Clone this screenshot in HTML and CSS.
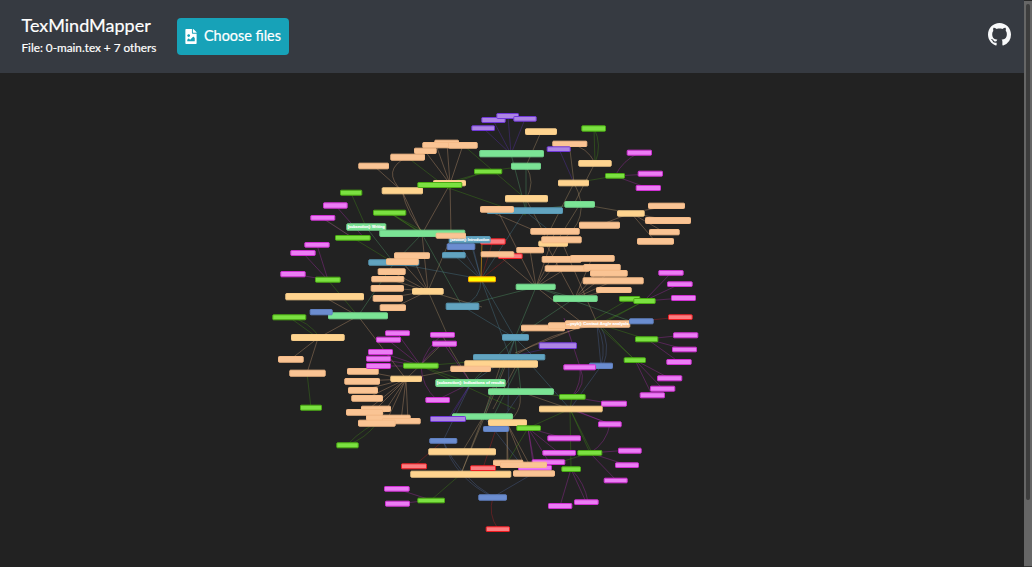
FILE: index.html
```html
<!DOCTYPE html>
<html lang="en">
<head>
<meta charset="utf-8">
<title>TexMindMapper</title>
<link rel="stylesheet" href="styles.css">
</head>
<body>
<div class="app">
  <div class="page">
    <header class="navbar">
      <div class="brand">
        <h1 class="brand-title">TexMindMapper</h1>
        <p class="brand-file">File: 0-main.tex + 7 others</p>
      </div>
      <button class="choose" type="button">
        <svg class="choose-icon" viewBox="0 0 384 512" aria-hidden="true"><path d="M384 121.941V128H256V0h6.059a24 24 0 0 1 16.97 7.029l97.941 97.941a24.002 24.002 0 0 1 7.03 16.971zM248 160c-13.2 0-24-10.8-24-24V0H24C10.745 0 0 10.745 0 24v464c0 13.255 10.745 24 24 24h336c13.255 0 24-10.745 24-24V160H248zm-135.455 16c26.51 0 48 21.49 48 48s-21.49 48-48 48-48-21.49-48-48 21.491-48 48-48zm208 240h-256l.485-48.485L104.545 328c4.686-4.686 11.799-4.201 16.485.485L160.545 368 264.06 264.485c4.686-4.686 12.284-4.686 16.971 0L320.545 304v112z"/></svg>
        <span>Choose files</span>
      </button>
      <a class="github" href="#" aria-label="GitHub">
        <svg viewBox="0 0 16 16"><path d="M8 0C3.58 0 0 3.58 0 8c0 3.54 2.29 6.53 5.47 7.59.4.07.55-.17.55-.38 0-.19-.01-.82-.01-1.49-2.01.37-2.53-.49-2.69-.94-.09-.23-.48-.94-.82-1.13-.28-.15-.68-.52-.01-.53.63-.01 1.08.58 1.23.82.72 1.21 1.87.87 2.33.66.07-.52.28-.87.51-1.07-1.78-.2-3.64-.89-3.64-3.95 0-.87.31-1.59.82-2.15-.08-.2-.36-1.02.08-2.12 0 0 .67-.21 2.2.82.64-.18 1.32-.27 2-.27s1.36.09 2 .27c1.53-1.04 2.2-.82 2.2-.82.44 1.1.16 1.92.08 2.12.51.56.82 1.27.82 2.15 0 3.07-1.87 3.75-3.65 3.95.29.25.54.73.54 1.48 0 1.07-.01 1.93-.01 2.2 0 .21.15.46.55.38A8.01 8.01 0 0 0 16 8c0-4.42-3.58-8-8-8z"/></svg>
      </a>
    </header>
    <main class="map">
      <svg id="graph" class="graph" viewBox="0 73 1024 494"></svg>
    </main>
  </div>
  <div class="scrollbar"><div class="thumb"></div></div>
</div>
<script src="graph.js"></script>
</body>
</html>
```
FILE: styles.css
```css
* { box-sizing: border-box; }
html, body { height: 100%; }
body { margin: 0; overflow: hidden; background: #222; color: #fff; font-family: Lato, sans-serif; }
.app { display: flex; height: 100%; }
.page { flex: 1; display: flex; flex-direction: column; min-width: 0; }
.navbar { display: flex; align-items: center; height: 73px; padding: 0 13px 0 21.5px; background: #363a41; }
.brand { width: 155.5px; padding-bottom: 2px; white-space: nowrap; }
.brand-title { margin: 0; font-size: 18px; line-height: 24px; font-weight: 400; -webkit-text-stroke: .2px #fff; }
.brand-file { margin: 0; font-size: 11.75px; line-height: 22px; -webkit-text-stroke: .2px #fff; }
.choose { display: flex; align-items: center; gap: 7px; width: 112px; height: 37px; padding: 0 8px 1px; border: 0; border-radius: 4px; background: #17a2b8; color: #fff; font: 400 14.4px/22px Lato, sans-serif; white-space: nowrap; }
.choose span { -webkit-text-stroke: .2px #fff; }
.choose-icon { flex: none; width: 12px; height: 15px; fill: #fff; }
.github { margin-left: auto; width: 23px; height: 23px; margin-top: -4px; }
.github svg { display: block; width: 23px; height: 23px; fill: #f8f9fa; }
.map { flex: 1; min-height: 0; }
.graph { display: block; width: 1024px; height: 494px; }
.scrollbar { width: 8px; padding: 3px 2px 0; background: #666; border-top: 1px solid #292929; border-bottom: 1px solid #333; }
.thumb { width: 4px; height: 496px; border-radius: 2px; background: #3d3d3d; }

.edge { fill: none; stroke-width: .9; stroke-opacity: .33; }
.node { stroke-width: 1; }
.label { font: 700 4.4px "Liberation Sans", sans-serif; fill: #fff; stroke: #fff; stroke-width: .15; text-anchor: middle; }

.node.orange { fill: #fac494; stroke: #f5bb88; }
.node.tan { fill: #ffd48f; stroke: #f5cb89; }
.node.mint { fill: #7be495; stroke: #72d28b; }
.node.teal { fill: #62a4c0; stroke: #5798b4; }
.node.blue { fill: #6b8dd0; stroke: #6080c0; }
.node.green { fill: #7be141; stroke: #4aab13; }
.node.pink { fill: #eb7df4; stroke: #d02fd3; }
.node.purple { fill: #ad85e4; stroke: #7038d8; }
.node.red { fill: #fb7e81; stroke: #f01c22; }
.node.yellow { fill: #ffff00; stroke: #ffa500; }

.edge.orange { stroke: #f5bb88; }
.edge.tan { stroke: #dcb880; }
.edge.mint { stroke: #62c580; }
.edge.teal { stroke: #5798b4; }
.edge.blue { stroke: #5b7abb; }
.edge.green { stroke: #4aab13; }
.edge.pink { stroke: #d02fd3; }
.edge.purple { stroke: #6a35d8; }
.edge.red { stroke: #e02025; }
.edge.yellow { stroke: #e09a10; stroke-opacity: .7; }
```
FILE: graph.js
```js
// Edges per colour: x1 y1 x2 y2 [bend], bend being the sideways offset of the curve.
const edges = {
  orange: `374 166 402 191;407 157 402 191 -12;425 151 450 184;436 145 450 184;447 143 450 184;463 145 450 184;450 184 422 234;402 191 422 234;402 191 424 234 -3;450 184 451 235;
    497 209 536 287;555 231 536 287;561 240 536 287;530 250 536 287;561 259 536 287;567 268 536 287;592 258 575 298;602 267 575 298;609 273 575 298;613 281 575 298;613 290 575 298;
    544 240 575 298;561 240 597 323;497 254 536 287;536 287 585 325;600 225 631 213;667 206 631 213;668 220 631 213;664 232 631 213;655 241 631 213;
    412 256 428 291;402 262 428 291;392 272 428 291;388 279 428 291;387 288 428 291;388 298 428 291;393 308 428 291;422 234 428 291;
    291 359 318 338;307 373 318 338;363 371 406 379;362 381 406 379;363 390 406 379;367 398 406 379;376 409 406 379;365 412 406 379;388 418 406 379;401 421 406 379;377 423 406 379;406 379 408 421;
    358 316 406 379;318 338 358 316;324 297 358 316;508 463 507 423;524 465 507 423;534 473 507 423;585 325 515 353;570 144 595 163 4;484 209 545 235;597 325 512 357 -5`,
  tan: `541 132 526 166;526 166 526 199 5;570 150 574 183;574 183 544 242;574 183 559 242 14;595 163 574 204;580 204 554 246;580 204 631 213;
    428 291 447 334;428 291 482 307;428 291 450 240;526 199 545 235;501 364 483 417;518 362 493 409;570 409 521 392;
    462 452 483 417;461 474 483 417;485 364 406 379;406 379 439 347;518 387 507 423 7;507 423 507 463;507 362 461 474;442 335 471 383`,
  mint: `511 154 526 211;526 166 526 211;366 227 394 263;422 234 394 263;394 263 358 316;422 234 462 306;580 204 525 211;
    462 306 536 287;536 287 575 298;536 287 515 338;575 298 515 338;515 338 471 383;515 338 483 417;515 338 521 392;536 287 630 321;524 355 494 415`,
  teal: `481 279 454 255;481 279 394 263;481 279 462 306 6;481 279 525 211;481 279 515 338;481 279 510 357;462 306 515 338;481 279 470 240;515 338 509 357;509 357 471 383;525 358 570 409;515 338 534 357;525 211 555 235`,
  blue: `481 279 461 247;481 279 472 243;597 325 601 366;597 325 601 366 4;601 366 570 409;471 383 443 441;496 429 521 392;443 441 493 497 -8;443 441 493 497 -6;493 497 534 473;600 325 603 366 5;484 417 520 463;509 357 508 410`,
  green: `351 193 366 227;390 213 422 234;390 213 425 235;390 213 430 235;353 238 394 263;320 216 353 238;488 171 450 184;488 171 440 185;402 191 440 185;407 157 450 190;440 185 526 215;488 171 526 166;463 145 526 199;
    594 128 595 163;594 128 595 163 4;615 176 574 183;328 280 358 316;289 317 318 338;289 317 320 338 4;307 373 311 408;377 423 347 445 3;388 418 347 445 -3;
    585 325 629 299;597 325 644 301;600 325 644 301;602 325 646 339;597 325 635 360;600 325 635 360;421 366 471 383;421 366 515 409;570 409 572 397;570 409 571 469;570 409 590 453;570 409 592 453;570 409 528 428;528 428 507 463;461 474 431 500;421 366 505 359;521 392 572 397;590 453 534 470`,
  pink: `335 205 366 240;322 218 353 238;317 245 328 280;303 253 328 280;293 274 328 280;639 153 615 176 -3;650 174 615 176;648 188 615 176;671 273 644 301;680 284 644 301;683 298 644 301;
    685 335 647 339;684 349 647 339;679 362 647 339;669 378 635 360;662 388 635 360;652 395 635 360;397 333 421 366;388 340 421 366;380 352 421 366;379 359 421 366;379 366 421 366;442 335 421 366 -3;444 344 421 366 -3;421 366 437 400 -4;
    397 489 431 500;397 504 431 500;580 367 572 397 6;580 367 572 397 3;614 404 572 397;570 409 610 424;572 409 610 424;610 424 590 453 4;630 450 590 453;627 465 590 453;616 480 590 453;564 438 528 428;559 453 528 428;549 462 528 428;535 468 528 428;528 428 533 463;571 469 560 506;571 469 586 502;571 469 588 502 3;564 318 580 367;471 383 437 400;444 344 471 383`,
  purple: `483 128 511 154;493 120 511 154;508 116 511 154;525 119 511 154;559 149 574 183;558 346 509 357;471 383 448 419;471 383 450 419`,
  red: `481 279 493 241;481 279 510 256;680 317 641 321;443 441 414 466;496 429 483 468;493 497 498 529 -4`,
  yellow: `481 279 482 240`
};

// Nodes in paint order: colour left top right bottom [label]
const nodes = `
teal 486.7 207.3 563 214
orange 480 206 514 212.7
purple 471.3 125.3 495 131
purple 481.3 117 505.7 123
purple 496.3 113 519 119
purple 513.3 116 536.7 121.7
mint 479.3 150 544 157.3
tan 525 128.3 557 135
orange 552.3 140.7 587.3 147
purple 546.7 146.3 570.7 152
green 581.3 125.3 606 131.7
tan 578.3 160 611.7 166.7
pink 626.7 149.7 652 155.7
green 605 173 625 178.7
pink 637.7 170.7 663 176.7
pink 635.7 185 661 191
tan 558 179.7 589 186.3
mint 511 162.7 541 169.7
green 474 168.7 502.3 174.3
tan 505 195 548 202.3
mint 564.3 201 595 207.7
tan 617 210.3 644.7 216.7
orange 648 202.7 685 209
orange 645 217 691 224
orange 649 229 679.7 235.3
orange 637 238 674 244.7
orange 579 221.7 620 228.7
orange 530.3 228 579.7 234.7
tan 538.3 240.7 568 246.7
orange 541.3 236.3 581.7 243.3
orange 516.3 247 544 253.3
orange 358.3 162.7 389 169.3
orange 390.3 153.7 425 160.7
orange 414 147.7 436.7 154
orange 434.3 139.7 459 146
orange 422.3 142 450 148.3
orange 448 142 477.7 148.7
tan 381.7 187.3 423 194.3
tan 433 180 466 186.3
green 417.3 182 462.3 188
green 340 189.7 362.3 195.7
pink 323 202.3 347.7 208.7
green 373 209.7 406.3 215.7
pink 310.3 215 335.3 220.7
mint 379.3 229.7 465.3 237
mint 346.3 223.3 386.3 230.7 [subsection]: Writing
green 335 235 370.7 240.7
pink 304.3 242 329.7 247.7
pink 290.3 250 315.7 256
pink 280.3 271 305.7 277.3
green 315 276.7 340.7 282.7
teal 368.3 259.3 419.3 265.7
orange 394 252.3 430 259
orange 386 258.3 418.7 265
orange 377.7 268.3 405.7 275
orange 371.3 276 404.3 282.3
orange 370.7 285 404 291.7
orange 372.7 295 403 301.7
orange 379.7 304.3 406 311
tan 412 288 443.7 294.7
tan 285.3 293 364 300.3
mint 328 312.3 388 319.3
blue 309.7 309 332.7 315.3
green 272.3 314.3 306.3 320.3
tan 291 334 344.7 341
pink 385 330.3 410 336
pink 376 336.7 401 342.7
orange 278 356 303.7 362.7
orange 289.3 369.7 325.7 376.7
green 300 404.7 322 410.7
orange 347 368 378.7 374.7
pink 368 349 393 355
pink 366 355.7 391 361.7
pink 366 363 391 369
green 403 362.7 438.7 368.7
tan 390.3 375.7 422 382
orange 344.3 378 380 384.7
orange 348 387 378 393.7
orange 351.3 395 383 401.7
orange 361 405.7 391 412
orange 346 409 383 415.7
orange 366 414.7 410.7 421
orange 382 418 420.7 424.3
orange 358 419.7 395.7 426.7
green 336.3 442.3 358.7 448.3
pink 425.3 397 450 403
red 480 238.3 505.7 244.7
blue 446.7 243.3 475.3 250
teal 448.7 236 490.7 243.3 [section]: Introduction
orange 435.7 232.7 466 238.7
teal 442 252 465.7 258.3
red 498 253.3 522.7 259
orange 480.7 251.3 514.3 257.3
yellow 468 276.3 496 282.3
mint 515.7 283.7 555.7 290
teal 445.7 302.7 479.3 310
teal 502 334 529 340.7
pink 430 332 455 337.7
pink 432 340.7 457 346.7
purple 538.7 342.3 577 349
teal 473 354 545.3 360.3
tan 464.3 360.3 538 367.7
orange 450.3 365.7 491 372
orange 541.7 256 581.7 262.7
orange 570 255 614.7 261.7
orange 544.7 265.3 590 271.7
orange 583.3 264 620.7 270.7
orange 590 270 627.7 276.7
orange 582.7 277.3 643.7 284.3
orange 596 287 631.7 293
mint 553 295.3 597.7 302
green 619 296 640.3 301.7
green 633.3 298 655.7 304
pink 658.3 270 683.7 275.7
pink 667 281.3 692.7 287
pink 671 295 696 301
red 668 314.3 692.7 320
orange 521 324.7 565 331.3
orange 548 322.3 580 329
orange 565 320.3 630.3 327.7 ...ysyb]: Contact Angle analysis
blue 629 318.3 653.7 324.3
green 635 336.3 658.3 342.3
pink 673 332.3 698.3 338.3
pink 672 346.7 697 352.3
green 623.7 357.3 646 363
pink 666.3 359 691.7 365
pink 657 375.3 682.3 381.3
pink 650 385.7 675.3 391.7
pink 639.7 392.3 665 398.3
blue 589 362.7 613 369
pink 563.3 364.3 596 370.3
green 559 394 585.7 399.7
pink 601 400.7 627 406.7
tan 539 405.7 602.7 412.3
pink 598 421.3 621.7 427.3
pink 547.3 435.3 581 441.3
pink 542.3 450 576 455.7
green 577.3 450 602.3 455.7
pink 618 447.7 641.7 453.7
pink 615 462.3 639 468
pink 603.7 477.7 627.7 483.3
green 561.3 466.3 581 472
pink 531.7 459.3 565.3 465
pink 518 465 552 470.7
pink 548 503 572.3 509
pink 574 499.3 598.7 505
orange 493 459.7 523.3 466
orange 500 461.7 547 468
orange 513 470.3 555 476.7
tan 410.3 470.7 511.3 477.7
red 470 465.3 496 471
tan 428.3 448.3 496 455.3
red 401 463.3 427 469.3
blue 429.3 438 457.3 443.7
mint 452 413.3 513 419.7
purple 430 416 466 422
tan 488 419.3 527 426
blue 483 426 509 432
green 516.3 425.3 541 431
pink 384 486 409.7 491.7
pink 385 500.7 410 506.7
green 417.3 497.7 445 503.3
blue 478.3 494.3 507 500.7
red 485.7 526.3 510 532
mint 435.3 379 505.7 387 [subsection]: Indications of results
mint 488 388.3 554 395`;

const graph = document.getElementById("graph");
function add(tag, attrs, text) {
  const el = document.createElementNS("http://www.w3.org/2000/svg", tag);
  for (const key in attrs) el.setAttribute(key, attrs[key]);
  if (text) el.textContent = text;
  graph.appendChild(el);
}

for (const color in edges) {
  for (const edge of edges[color].split(";")) {
    const [x1, y1, x2, y2, bend = 0] = edge.trim().split(" ").map(Number);
    const len = Math.hypot(x2 - x1, y2 - y1);
    const cx = (x1 + x2) / 2 + 2 * bend * (y2 - y1) / len;
    const cy = (y1 + y2) / 2 - 2 * bend * (x2 - x1) / len;
    add("path", { class: "edge " + color, d: `M${x1} ${y1}Q${cx} ${cy} ${x2} ${y2}` });
  }
}
for (const row of nodes.trim().split("\n")) {
  const [color, l, t, r, b, ...label] = row.split(" ");
  add("rect", { class: "node " + color, x: +l + .5, y: +t + .5, width: r - l - 1, height: b - t - 1, rx: .8 });
  if (label.length) {
    add("text", { class: "label", x: (+l + +r) / 2, y: (+t + +b) / 2 + 1.4, textLength: r - l - 3, lengthAdjust: "spacingAndGlyphs" }, label.join(" "));
  }
}
```
